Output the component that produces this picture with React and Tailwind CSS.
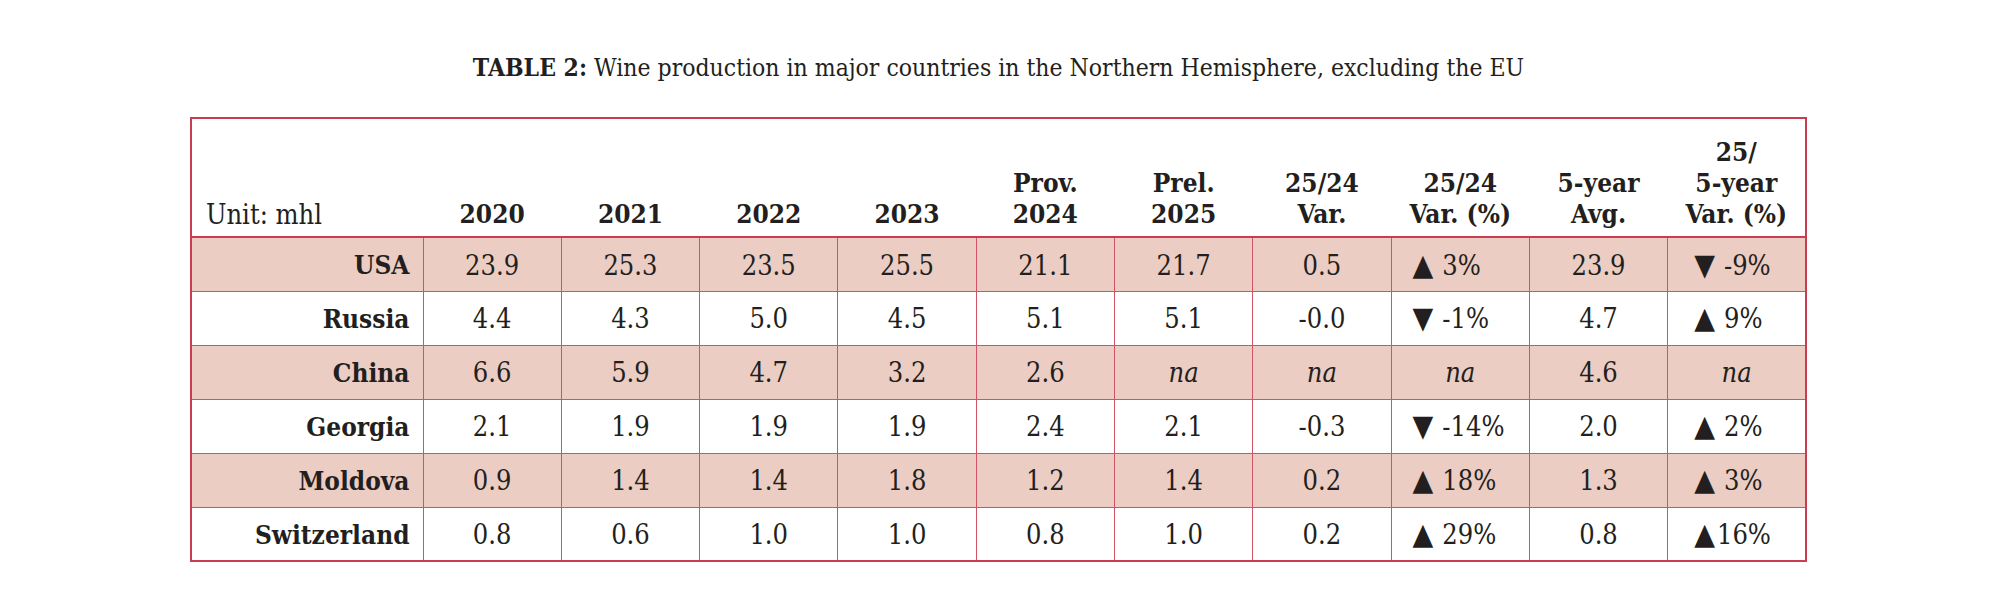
import React from 'react';

// Colonnes d'en-tête : chaque entrée est une liste de lignes.
const HEADERS = [
  ['2020'],
  ['2021'],
  ['2022'],
  ['2023'],
  ['Prov.', '2024'],
  ['Prel.', '2025'],
  ['25/24', 'Var.'],
  ['25/24', 'Var. (%)'],
  ['5-year', 'Avg.'],
  ['25/', '5-year', 'Var. (%)'],
];

const ROWS = [
  { name: 'USA', shaded: true, values: ['23.9', '25.3', '23.5', '25.5', '21.1', '21.7', '0.5', '▲ 3%', '23.9', '▼ -9%'] },
  { name: 'Russia', shaded: false, values: ['4.4', '4.3', '5.0', '4.5', '5.1', '5.1', '-0.0', '▼ -1%', '4.7', '▲ 9%'] },
  { name: 'China', shaded: true, values: ['6.6', '5.9', '4.7', '3.2', '2.6', 'na', 'na', 'na', '4.6', 'na'] },
  { name: 'Georgia', shaded: false, values: ['2.1', '1.9', '1.9', '1.9', '2.4', '2.1', '-0.3', '▼ -14%', '2.0', '▲ 2%'] },
  { name: 'Moldova', shaded: true, values: ['0.9', '1.4', '1.4', '1.8', '1.2', '1.4', '0.2', '▲ 18%', '1.3', '▲ 3%'] },
  { name: 'Switzerland', shaded: false, values: ['0.8', '0.6', '1.0', '1.0', '0.8', '1.0', '0.2', '▲ 29%', '0.8', '▲16%'] },
];

// Les variations en % : triangle puis valeur, alignés à gauche.
function Variation({ value }) {
  const arrow = value[0];
  const rest = value.slice(1);
  const spaced = rest.startsWith(' ');
  return (
    <>
      <span className="text-[30px] leading-none">{arrow}</span>
      <span className={spaced ? 'ml-[9px]' : 'ml-[2px]'}>{rest.trim()}</span>
    </>
  );
}

export default function App() {
  return (
    <div className="w-full h-[596px] bg-white text-[#231f20] font-['DejaVu_Serif_Condensed','DejaVu_Serif',serif] font-stretch-condensed">
      <p className="pt-[52px] text-center text-[24.5px] leading-[32px]">
        <span className="font-bold">TABLE 2:</span> Wine production in major countries in the Northern Hemisphere, excluding the EU
      </p>

      <table className="mt-[33px] mx-auto w-[1617px] table-fixed border-collapse border-2 border-[#c73d52]">
        <colgroup>
          <col className="w-[232px]" />
          {HEADERS.map((_, i) => (
            <col key={i} />
          ))}
        </colgroup>
        <thead>
          <tr className="h-[119px] border-b-2 border-[#c73d52]">
            <th className="align-bottom text-left font-normal text-[27px] leading-[31px] pl-[14px] pb-[6px]">Unit: mhl</th>
            {HEADERS.map((lines, i) => (
              <th key={i} className="align-bottom text-center font-bold text-[26px] leading-[31px] pb-[6px]">
                {lines.map((l, j) => (
                  <div key={j}>{l}</div>
                ))}
              </th>
            ))}
          </tr>
        </thead>
        <tbody>
          {ROWS.map((row) => (
            <tr key={row.name} className={`h-[54px] ${row.shaded ? 'bg-[#eccdc3]' : 'bg-white'}`}>
              <td className="text-right font-bold text-[26px] pr-[13px] pt-[3px] border border-[#cf5466]">{row.name}</td>
              {row.values.map((v, i) => {
                const isVar = v[0] === '▲' || v[0] === '▼';
                return (
                  <td
                    key={i}
                    className={`text-[27px] pt-[3px] border border-[#cf5466] whitespace-nowrap ${
                      v === 'na' ? 'italic' : ''
                    } ${isVar ? (i === 9 ? 'text-left pl-[26px]' : 'text-left pl-[21px]') : 'text-center'}`}
                  >
                    {isVar ? <Variation value={v} /> : v}
                  </td>
                );
              })}
            </tr>
          ))}
        </tbody>
      </table>
    </div>
  );
}
